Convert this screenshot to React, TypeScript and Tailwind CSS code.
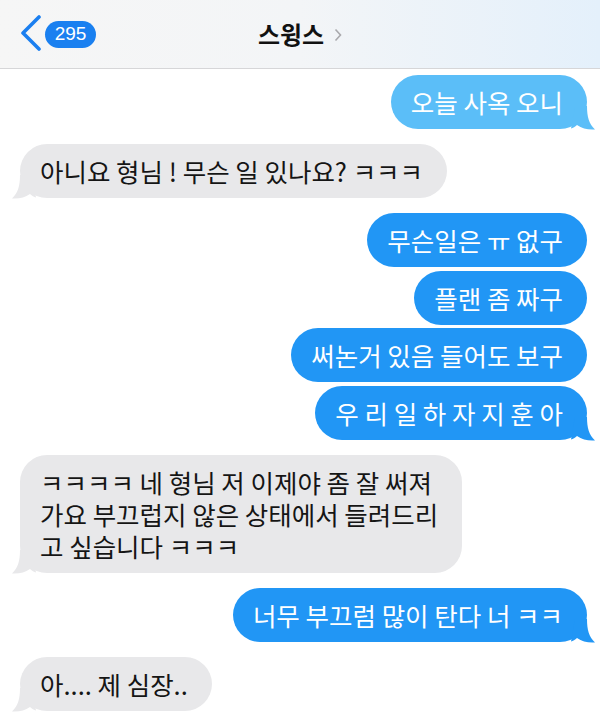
import type { ReactNode } from 'react'

type Msg = {
  from: 'me' | 'them'
  text: ReactNode
  tail: boolean
  light?: boolean
}

const messages: Msg[] = [
  { from: 'me', text: '오늘 사옥 오니', tail: true, light: true },
  { from: 'them', text: '아니요 형님 ! 무슨 일 있나요? ㅋㅋㅋ', tail: true },
  { from: 'me', text: '무슨일은 ㅠ 없구', tail: false },
  { from: 'me', text: '플랜 좀 짜구', tail: false },
  { from: 'me', text: '써논거 있음 들어도 보구', tail: false },
  { from: 'me', text: '우 리 일 하 자 지 훈 아', tail: true },
  {
    from: 'them',
    text: (
      <>
        <div className="h-[32px]">ㅋㅋㅋㅋ 네 형님 저 이제야 좀 잘 써져</div>
        <div className="h-[32px]">가요 부끄럽지 않은 상태에서 들려드리</div>
        <div className="h-[32px]">고 싶습니다 ㅋㅋㅋ</div>
      </>
    ),
    tail: true,
  },
  { from: 'me', text: '너무 부끄럼 많이 탄다 너 ㅋㅋ', tail: true },
  { from: 'them', text: '아.... 제 심장..', tail: true },
]

function Tail({ side, color }: { side: 'left' | 'right'; color: string }) {
  return (
    <svg
      width="24"
      height="24"
      viewBox="0 0 24 24"
      className={
        side === 'right'
          ? 'absolute -right-[8px] -bottom-[1px]'
          : 'absolute -left-[8px] -bottom-[1px] -scale-x-100'
      }
    >
      <path
        d="M4 0H16C16 11 18 18 24 23.5C17 24 11 22.5 6 19C4 21 2 22 0 22.5Z"
        fill={color}
      />
    </svg>
  )
}

function Bubble({ msg }: { msg: Msg }) {
  const mine = msg.from === 'me'
  const color = mine ? (msg.light ? '#5bbef8' : '#2196f5') : '#e8e8ea'
  return (
    <div className={mine ? 'flex justify-end pr-[13px]' : 'flex justify-start pl-5'}>
      <div
        className={
          mine
            ? msg.light
              ? 'relative rounded-[27px] bg-[#5bbef8] pl-5 pr-[24px] py-[11px] text-[25.5px] leading-[32px] text-white'
              : 'relative rounded-[27px] bg-[#2196f5] pl-5 pr-[24px] py-[11px] text-[25.5px] leading-[32px] text-white'
            : 'relative rounded-[27px] bg-[#e8e8ea] pl-5 pr-[24px] py-[11px] text-[25.5px] leading-[32px] text-[#151515]'
        }
      >
        <div className="relative z-10">{msg.text}</div>
        {msg.tail && <Tail side={mine ? 'right' : 'left'} color={color} />}
      </div>
    </div>
  )
}

export default function App() {
  return (
    <div
      className="h-[725px] w-[600px] overflow-hidden bg-white"
      style={{ fontFamily: '"Noto Sans CJK KR", "Noto Sans", sans-serif' }}
    >
      <header className="flex h-[69px] items-center border-b border-[#d6d6d8] bg-gradient-to-r from-[#f6f6f6] via-[#f3f5f7] to-[#e4f0fb] px-[20px]">
        <div className="flex w-[150px] items-center gap-[3px]">
          <svg width="22" height="36" viewBox="0 0 22 36" className="-mt-[2px]">
            <path
              d="M19 2L3 18L19 34"
              fill="none"
              stroke="#1b7ff0"
              strokeWidth="3.6"
              strokeLinecap="round"
              strokeLinejoin="round"
            />
          </svg>
          <span className="flex h-[27px] w-[51px] items-center justify-center rounded-full bg-[#1a80f0] font-['Liberation_Sans'] text-[19px] text-white">
            295
          </span>
        </div>
        <div className="flex flex-1 items-center justify-center gap-[10px] pr-[150px]">
          <span className="text-[24px] font-bold text-[#111]">스윙스</span>
          <svg width="8" height="14" viewBox="0 0 8 14" className="mt-[2px]">
            <path d="M1.5 1.5L6.5 7L1.5 12.5" fill="none" stroke="#a9a9ad" strokeWidth="1.6" />
          </svg>
        </div>
      </header>
      <main className="flex flex-col pt-[6px]">
        {messages.map((m, i) => {
          const prev = messages[i - 1]
          const sameGroup = prev && prev.from === m.from && !prev.tail
          return (
            <div key={i} className={i === 0 ? '' : sameGroup ? 'mt-[3.5px]' : 'mt-[15px]'}>
              <Bubble msg={m} />
            </div>
          )
        })}
      </main>
    </div>
  )
}
